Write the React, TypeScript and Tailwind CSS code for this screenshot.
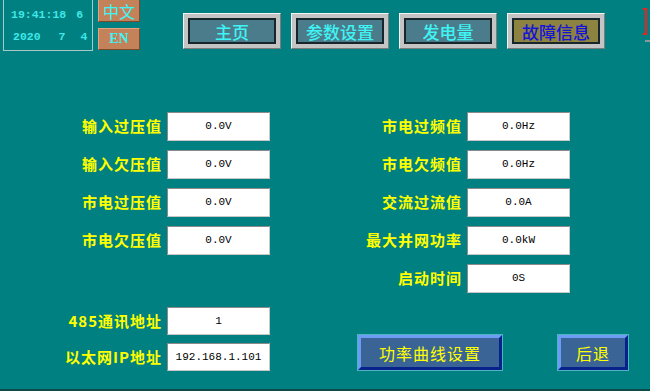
const cjk = { fontFamily: '"Noto Sans CJK SC", sans-serif' }

const NavButton = ({ label, active }: { label: string; active?: boolean }) => (
  <div className="w-[98px] h-[36px] bg-[#c4c4c4] p-[4px] border border-t-[#f4f4f4] border-l-[#f4f4f4] border-r-[#7c7c7c] border-b-[#7c7c7c]">
    <div
      className={`h-full flex items-center justify-center border-2 border-[#18262c] text-[17px] font-medium leading-none ${
        active ? 'bg-[#8c8340] text-[#1414d8]' : 'bg-[#4b7c8b] text-[#3ff4f4]'
      }`}
      style={cjk}
    >
      {label}
    </div>
  </div>
)

const Field = ({ label, value, labelW, h = 'h-[29px]' }: { label: string; value: string; labelW: string; h?: string }) => (
  <div className={`flex items-center ${h}`}>
    <div className={`${labelW} pr-[5px] text-right text-[15px] font-bold text-[#ffff00] tracking-[1px]`} style={cjk}>
      {label}
    </div>
    <div className="w-[103px] h-full bg-white border border-t-[#8a8a8a] border-l-[#8a8a8a] border-r-[#c8c8c8] border-b-[#c8c8c8] flex items-center justify-center text-[11px] text-black font-['Liberation_Mono',monospace]">
      {value}
    </div>
  </div>
)

const BlueButton = ({ label, w }: { label: string; w: string }) => (
  <div className={`${w} h-[37px] border border-[#4fb3c4]`}>
    <div className="h-full bg-[#3a6496] border-[3px] border-t-[#6d9cf4] border-l-[#6d9cf4] border-r-[#07228a] border-b-[#07228a] flex items-center justify-center text-[16px] text-[#ffff00] tracking-[1px]" style={cjk}>
      {label}
    </div>
  </div>
)

export default function App() {
  return (
    <div className="w-[650px] h-[391px] bg-[#008080] overflow-hidden flex flex-col border-b-2 border-[#0d4a4a]">
      {/* header */}
      <div className="flex items-start h-[50px]">
        <div className="ml-[3px] w-[90px] h-[51px] border-x border-b border-[#a9c9c9] font-['Liberation_Mono',monospace] text-[11.5px] font-bold text-[#3ee8e8] leading-none">
          <div className="flex mt-[9px] pl-[7px]">
            <span>19:41:18</span>
            <span className="ml-[10px]">6</span>
          </div>
          <div className="flex mt-[10px] pl-[9px]">
            <span>2020</span>
            <span className="ml-[18px]">7</span>
            <span className="ml-[15px]">4</span>
          </div>
        </div>
        <div className="ml-[5px] w-[42px] flex flex-col gap-[6px] -mt-[2px]">
          <div className="h-[24px] bg-[#c4825a] border border-t-[#e2a47c] border-l-[#e2a47c] border-r-[#7a4a2a] border-b-[#7a4a2a] flex items-center justify-center pt-[2px] text-[16px] text-[#3ff4f4] leading-none" style={cjk}>
            中文
          </div>
          <div className="h-[22px] bg-[#c4825a] border border-t-[#e2a47c] border-l-[#e2a47c] border-r-[#7a4a2a] border-b-[#7a4a2a] flex items-center justify-center text-[14px] font-bold text-[#3ff4f4] leading-none font-['Liberation_Serif',serif]">
            EN
          </div>
        </div>
        <div className="ml-[43px] mt-[13px] flex gap-[10px]">
          <NavButton label="主页" />
          <NavButton label="参数设置" />
          <NavButton label="发电量" />
          <NavButton label="故障信息" active />
        </div>
        <div className="ml-auto mt-[8px] flex flex-col items-end">
          <div className="w-[4px] h-[27px] border-y-2 border-r-2 border-[#ff1a1a] mr-[3px]" />
          <div className="w-[5px] h-[2px] bg-[#8a9a9a] mt-[5px]" />
        </div>
      </div>

      {/* parameters */}
      <div className="mt-[62px] flex">
        <div className="flex flex-col gap-[9px]">
          <Field label="输入过压值" value="0.0V" labelW="w-[167px]" />
          <Field label="输入欠压值" value="0.0V" labelW="w-[167px]" />
          <Field label="市电过压值" value="0.0V" labelW="w-[167px]" />
          <Field label="市电欠压值" value="0.0V" labelW="w-[167px]" />
        </div>
        <div className="flex flex-col gap-[9px]">
          <Field label="市电过频值" value="0.0Hz" labelW="w-[197px]" />
          <Field label="市电欠频值" value="0.0Hz" labelW="w-[197px]" />
          <Field label="交流过流值" value="0.0A" labelW="w-[197px]" />
          <Field label="最大并网功率" value="0.0kW" labelW="w-[197px]" />
          <Field label="启动时间" value="0S" labelW="w-[197px]" />
        </div>
      </div>

      <div className="mt-[14px] flex">
        <div className="flex flex-col gap-[8px]">
          <Field label="485通讯地址" value="1" labelW="w-[167px]" h="h-[28px]" />
          <Field label="以太网IP地址" value="192.168.1.101" labelW="w-[167px]" h="h-[28px]" />
        </div>
        <div className="ml-[87px] mt-[27px] flex gap-[54px]">
          <BlueButton label="功率曲线设置" w="w-[146px]" />
          <BlueButton label="后退" w="w-[72px]" />
        </div>
      </div>
    </div>
  )
}
